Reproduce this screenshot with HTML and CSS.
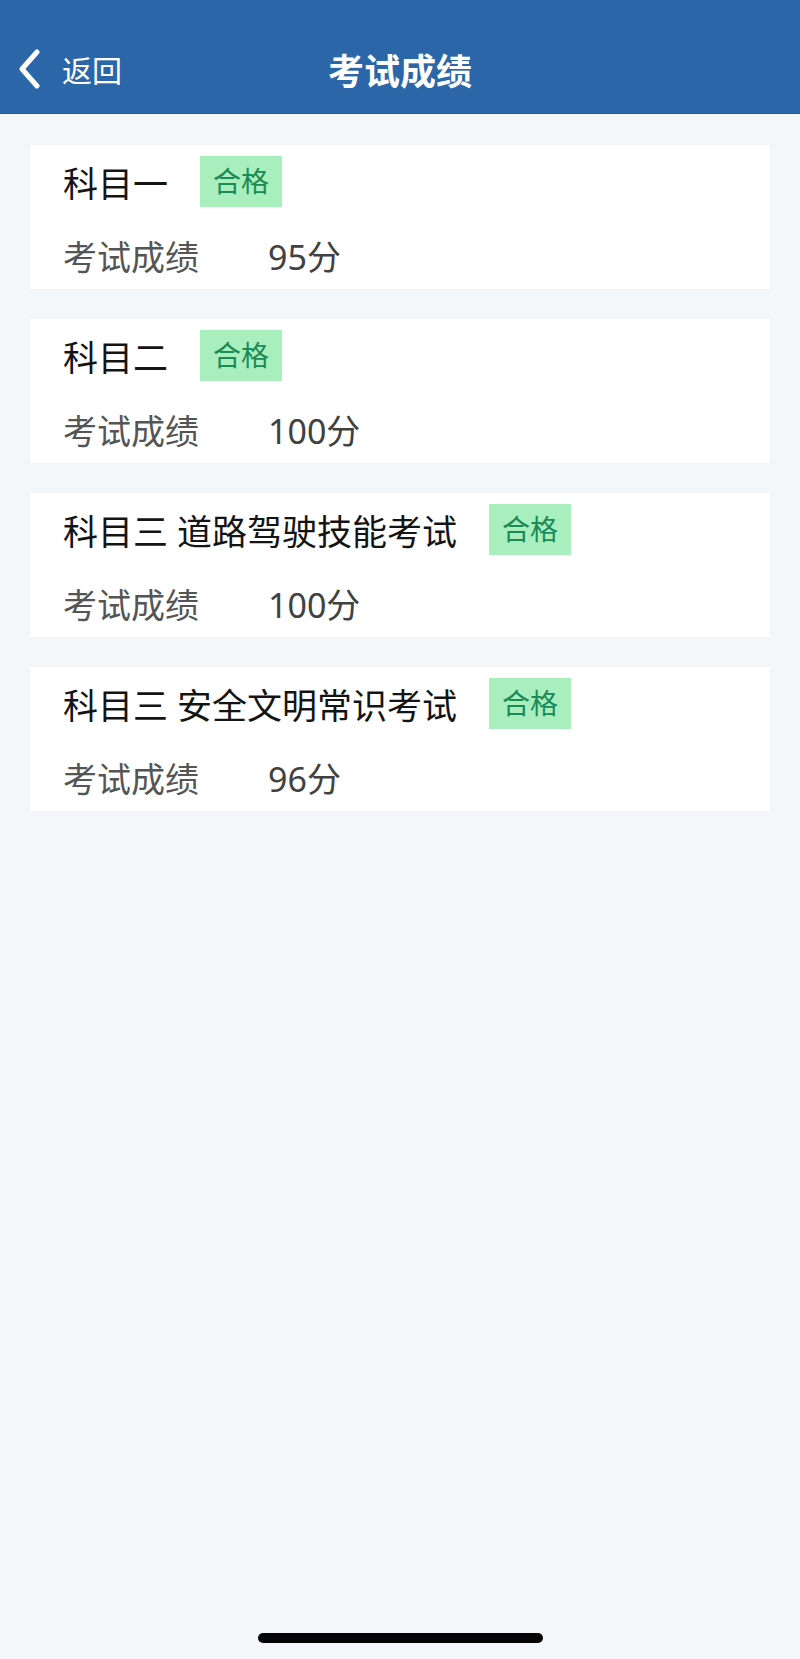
FILE: index.html
```html
<!DOCTYPE html>
<html lang="zh-CN">
<head>
    <meta charset="UTF-8">
    <meta name="viewport" content="width=device-width, initial-scale=1.0">
    <title>考试成绩</title>
    <link rel="stylesheet" href="styles.css">
</head>
<body>
<div class="page">
    <!-- 顶部导航 -->
    <header class="nav-bar">
        <a class="nav-back" href="#">
            <svg class="nav-back-icon" width="28" height="40" viewBox="0 0 28 40">
                <path d="M21 3 L6 20 L21 37" fill="none" stroke="#fff" stroke-width="5" stroke-linecap="round" stroke-linejoin="round"/>
            </svg>
            <span>返回</span>
        </a>
        <h1 class="nav-title">考试成绩</h1>
    </header>

    <!-- 成绩列表 -->
    <main class="score-list">
        <div class="score-card">
            <div class="score-head">
                <span class="subject">科目一</span>
                <span class="tag-pass">合格</span>
            </div>
            <div class="score-row">
                <span class="score-label">考试成绩</span>
                <span class="score-value">95分</span>
            </div>
        </div>
        <div class="score-card">
            <div class="score-head">
                <span class="subject">科目二</span>
                <span class="tag-pass">合格</span>
            </div>
            <div class="score-row">
                <span class="score-label">考试成绩</span>
                <span class="score-value">100分</span>
            </div>
        </div>
        <div class="score-card">
            <div class="score-head">
                <span class="subject">科目三 道路驾驶技能考试</span>
                <span class="tag-pass">合格</span>
            </div>
            <div class="score-row">
                <span class="score-label">考试成绩</span>
                <span class="score-value">100分</span>
            </div>
        </div>
        <div class="score-card">
            <div class="score-head">
                <span class="subject">科目三 安全文明常识考试</span>
                <span class="tag-pass">合格</span>
            </div>
            <div class="score-row">
                <span class="score-label">考试成绩</span>
                <span class="score-value">96分</span>
            </div>
        </div>
    </main>

    <!-- 底部横条 -->
    <div class="home-bar"></div>
</div>
</body>
</html>
```

FILE: styles.css
```css
/* 重置样式 */
* {
    margin: 0;
    padding: 0;
    box-sizing: border-box;
}

body {
    font-family: "Noto Sans", "Noto Sans CJK SC", sans-serif;
    background-color: #f4f7f9;
}

.page {
    display: flex;
    flex-direction: column;
    height: 1659px;
}

/* 顶部导航 */
.nav-bar {
    position: relative;
    height: 114px;
    padding-top: 24px;
    background-color: #2b66a9;
    border-bottom: 1px solid #25588f;
    display: flex;
    align-items: center;
    justify-content: center;
}

.nav-back {
    position: absolute;
    left: 16px;
    top: 49px;
    display: flex;
    align-items: center;
    color: #fff;
    text-decoration: none;
    font-size: 30px;
    line-height: 40px;
    font-family: "Noto Sans CJK SC", sans-serif;
}

.nav-back-icon {
    margin-right: 18px;
}

.nav-title {
    color: #fff;
    font-size: 36px;
    font-weight: bold;
    font-family: "Noto Sans CJK SC", sans-serif;
    line-height: 44px;
}

/* 成绩列表 */
.score-list {
    flex: 1;
    padding: 31px 30px 0;
    display: flex;
    flex-direction: column;
    gap: 30px;
}

.score-card {
    background-color: #fff;
    height: 144px;
    padding: 11px 20px 11px 33px;
    box-shadow: 0 0 3px rgba(0, 0, 0, 0.03);
}

.score-head {
    display: flex;
    align-items: center;
    height: 51px;
}

.subject {
    font-size: 35px;
    color: #141414;
    white-space: pre;
}

.tag-pass {
    margin-left: 32px;
    height: 51px;
    line-height: 51px;
    padding: 0 13px;
    font-size: 28px;
    color: #1b8a57;
    background-color: #a9efbd;
}

.score-row {
    display: flex;
    align-items: center;
    margin-top: 26px;
    height: 44px;
    font-size: 34px;
}

.score-label {
    width: 205px;
    color: #555;
}

.score-value {
    color: #414141;
}

/* 底部横条 */
.home-bar {
    width: 285px;
    height: 10px;
    border-radius: 5px;
    background-color: #050505;
    margin: 0 auto 16px;
}
```
